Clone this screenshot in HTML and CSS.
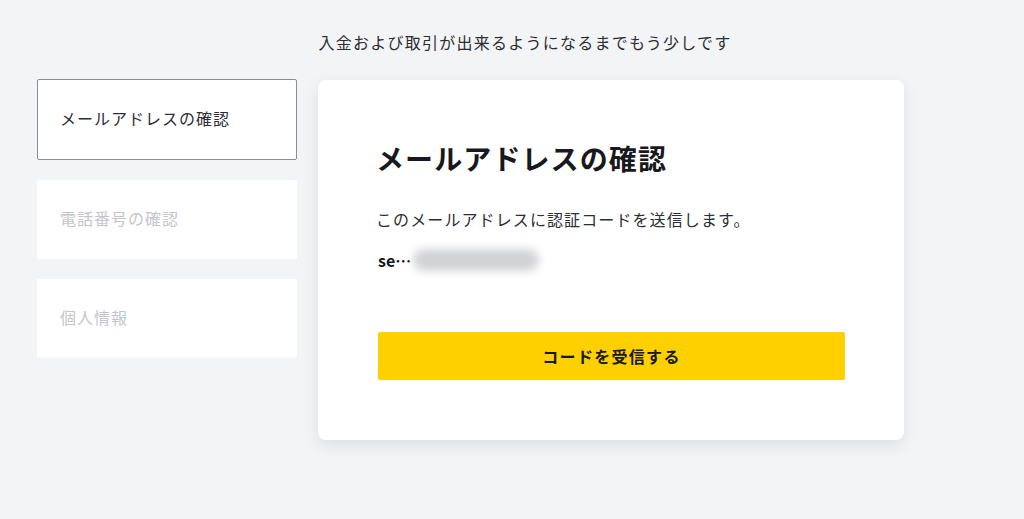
FILE: index.html
```html
<!DOCTYPE html>
<html lang="ja">
<head>
<meta charset="utf-8">
<link rel="stylesheet" href="styles.css">
</head>
<body>
<p class="lead">入金および取引が出来るようになるまでもう少しです</p>
<div class="layout">
  <nav class="steps">
    <div class="step active">メールアドレスの確認</div>
    <div class="step">電話番号の確認</div>
    <div class="step">個人情報</div>
  </nav>
  <section class="card">
    <h1 class="title">メールアドレスの確認</h1>
    <p class="desc">このメールアドレスに認証コードを送信します。</p>
    <p class="email">se…<span class="blur"></span></p>
    <button class="btn">コードを受信する</button>
  </section>
</div>
</body>
</html>
```
FILE: styles.css
```css
* { box-sizing: border-box; }
html, body { margin: 0; padding: 0; }
body {
  background: #f3f4f6;
  font-family: "Noto Sans CJK JP", "Noto Sans", sans-serif;
  color: #1f2226;
  width: 1024px;
  height: 519px;
  overflow: hidden;
}
.lead {
  margin: 0;
  padding-top: 30px;
  text-align: center;
  font-size: 16px;
  line-height: 24px;
  letter-spacing: 1.25px;
  color: #2b2e33;
  padding-left: 26px;
}
.layout {
  display: flex;
  align-items: flex-start;
  gap: 21px;
  margin-top: 25px;
  padding-left: 37px;
}
.steps {
  width: 260px;
  display: flex;
  flex-direction: column;
  gap: 20px;
}
.step {
  height: 79px;
  background: #fff;
  border-radius: 2px;
  padding-left: 23px;
  padding-bottom: 3px;
  display: flex;
  align-items: center;
  font-size: 16px;
  letter-spacing: 1px;
  color: #c4c6c9;
}
.step.active {
  height: 81px;
  border: 1px solid #8a8d91;
  padding-left: 22px;
  color: #2b2e33;
}
.card {
  width: 586px;
  margin-top: 1px;
  background: #fff;
  border-radius: 8px;
  box-shadow: 0 5px 16px rgba(0,0,0,0.09);
  padding: 58px 59px 60px 58px;
}
.title {
  margin: 0;
  font-size: 28px;
  line-height: 40px;
  font-weight: 700;
  letter-spacing: 1.1px;
  color: #17191c;
}
.desc {
  margin: 29px 0 0;
  font-size: 16px;
  line-height: 24px;
  letter-spacing: 1.1px;
  color: #2b2e33;
}
.email {
  margin: 17px 0 0 2px;
  font-size: 16px;
  line-height: 24px;
  font-weight: 700;
  display: flex;
  align-items: center;
  color: #17191c;
}
.blur {
  display: inline-block;
  width: 126px;
  height: 22px;
  margin-left: 2px;
  background: #d2d3d5;
  border-radius: 11px;
  filter: blur(4px);
}
.btn {
  display: block;
  margin-top: 60px;
  margin-left: 2px;
  width: 467px;
  height: 48px;
  border: none;
  border-radius: 2px;
  background: #ffd000;
  font-family: inherit;
  font-size: 16px;
  font-weight: 700;
  letter-spacing: 1.3px;
  color: #17191c;
  cursor: pointer;
}
```
